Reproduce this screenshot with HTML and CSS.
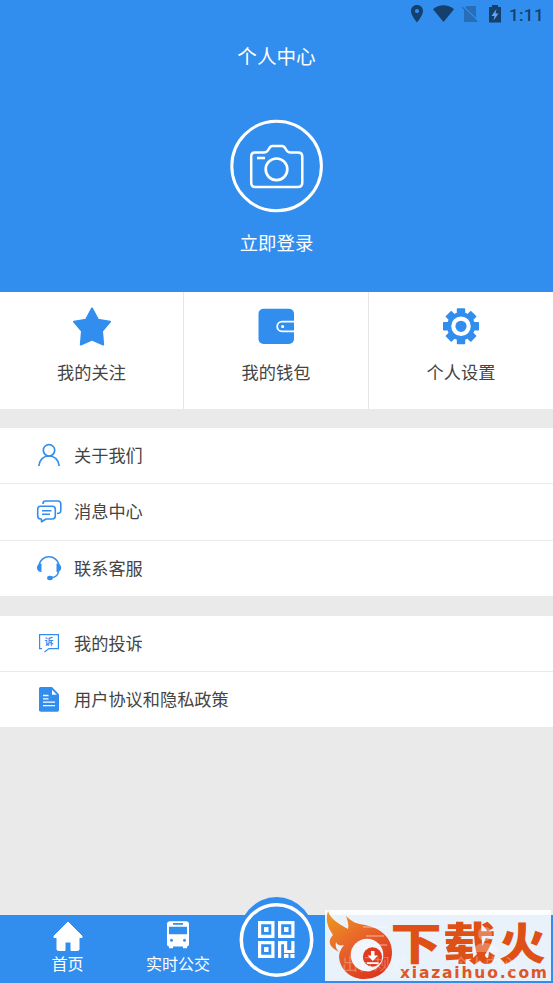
FILE: index.html
```html
<!DOCTYPE html>
<html lang="zh-CN">
<head>
<meta charset="utf-8">
<title>个人中心</title>
<link rel="stylesheet" href="styles.css">
</head>
<body>
<div class="screen">
  <header class="hero">
    <div class="status">
      <svg width="133" height="24" viewBox="0 0 133 24">
        <path fill="#153f6c" fill-rule="evenodd" d="M7 2C3.500 2 1 4.500 1 8c0 4.500 6 11.500 6 11.500S13 12.500 13 8c0-3.500-2.500-6-6-6zm0 4a2.100 2.100 0 1 1 0 4.200A2.100 2.100 0 0 1 7 6z"/>
        <path fill="#153f6c" d="M23 6.200C29 1 38 1 44 6.200L33.500 19z"/>
        <path fill="#276db8" d="M57 3h9v16H54V6z"/>
        <path d="M52.500 3l16 15" stroke="#318eef" stroke-width="1.500"/>
        <path d="M52 4l15.500 15" stroke="#276db8" stroke-width="1.300"/>
        <path fill="#153f6c" d="M79 4h3V2h6v2h3v15.500H79z"/>
        <path fill="#5fa9f5" d="M86.500 6l-5 7h3l-1 4.500 5-7h-3z"/>
      </svg>
      <span class="clock">1:11</span>
    </div>
    <h1 class="title">个人中心</h1>
    <svg class="avatar" width="94" height="94" viewBox="0 0 94 94" fill="none" stroke="#fff">
      <circle cx="46.600" cy="47" r="44.800" stroke-width="3"/>
      <path stroke-width="2.500" stroke-linejoin="round" d="M25 33.500h9c2.500 0 3.500-1 4.500-3 1-2.200 2-3.500 4-3.500h9.500c2 0 3 1.300 4 3.500 1 2 2 3 4.500 3h7.500c3 0 4.300 1.500 4.300 4v26c0 3-1.300 4.500-4.300 4.500H25c-3 0-3.800-1.500-3.800-4.500v-26c0-2.500.8-4 3.800-4z"/>
      <circle cx="46.500" cy="50.300" r="10.800" stroke-width="2.700"/>
      <path d="M27 39h8" stroke-width="2.600"/>
    </svg>
    <div class="login">立即登录</div>
  </header>

  <section class="shortcuts">
    <div class="shortcut">
      <svg width="40" height="40" viewBox="0 0 40 40"><path fill="#318eef" stroke="#318eef" stroke-width="2" stroke-linejoin="round" d="M20 2.500l6 11.200 12 2-8 9.300 1.200 13.500L20 33.500 8.800 38.500 10 25 2 15.700l12-2z"/></svg>
      <span>我的关注</span>
    </div>
    <div class="shortcut">
      <svg width="40" height="40" viewBox="0 0 40 40"><rect x="2.500" y="2.800" width="35.500" height="35.200" rx="5" fill="#318eef"/><path d="M38 15.700H26a4.800 4.800 0 0 0 0 9.600h12" fill="none" stroke="#fff" stroke-width="1.800"/><circle cx="26.600" cy="20.500" r="1.600" fill="#fff"/></svg>
      <span>我的钱包</span>
    </div>
    <div class="shortcut">
      <svg width="40" height="40" viewBox="0 0 40 40" fill="#318eef">
        <g transform="translate(0 .6)">
          <g><rect x="15.800" y="1.700" width="8.400" height="36" rx=".8"/><rect x="2" y="15.500" width="36" height="8.400" rx=".8"/></g>
          <g transform="rotate(45 20 19.700)"><rect x="15.800" y="1.700" width="8.400" height="36" rx=".8"/><rect x="2" y="15.500" width="36" height="8.400" rx=".8"/></g>
          <circle cx="20" cy="19.700" r="14"/><circle cx="20" cy="19.700" r="7.700" fill="none" stroke="#fff" stroke-width="4.200"/>
        </g>
      </svg>
      <span>个人设置</span>
    </div>
  </section>

  <section class="list">
    <div class="row">
      <svg width="26" height="26" viewBox="0 0 26 26" fill="none" stroke="#318eef" stroke-width="1.700"><circle cx="13" cy="8.300" r="5.700"/><path d="M2.800 24C3.300 17.800 7.500 14 13 14s9.700 3.800 10.200 10"/></svg>
      <span>关于我们</span>
    </div>
    <div class="row">
      <svg width="26" height="26" viewBox="0 0 26 26" fill="none" stroke="#318eef" stroke-width="1.600" stroke-linejoin="round"><path d="M7 6V5.500C7 4 8 3 9.500 3h12.300c2 0 3 1 3 3v6.500c0 2-.8 3-3.800 3"/><path d="M4.500 8.300h11.800c2 0 3 1 3 3v6.500c0 2-1 3.200-3 3.200H10l-4.500 2.800V21h-1c-2 0-2.800-1.200-2.800-3.200v-6.500c0-2 .8-3 2.800-3zM6 12.800h9.500M6 16.300h8"/></svg>
      <span>消息中心</span>
    </div>
    <div class="row">
      <svg width="26" height="26" viewBox="0 0 26 26" fill="none" stroke="#318eef" stroke-width="1.600"><path d="M3 9.800C4 5.300 8 1.800 13 1.800S22 5.300 23 9.800M22.500 16c-.5 4.500-3 6.500-7 6.500"/><path fill="#318eef" stroke="none" d="M5.500 8.500v8.500C2.500 17 1 15.500 1 12.800s1.500-4.300 4.500-4.300zM20.500 8.500V17c3 0 4.700-1.500 4.700-4.200s-1.700-4.300-4.700-4.300z"/><ellipse cx="14" cy="23" rx="2.900" ry="2.200" fill="#318eef" stroke="none"/></svg>
      <span>联系客服</span>
    </div>
  </section>

  <section class="list">
    <div class="row">
      <svg width="26" height="26" viewBox="0 0 26 26"><path fill="none" stroke="#318eef" stroke-width="1.200" d="M6 18.600H3.600V4.600h18.800v14H13L8.500 22"/><text class="mini" x="13" y="15.200" text-anchor="middle">诉</text></svg>
      <span>我的投诉</span>
    </div>
    <div class="row">
      <svg width="26" height="26" viewBox="0 0 26 26"><path fill="#318eef" d="M5 1h11L23 8.300V24c0 1-.7 1.700-1.700 1.700H5c-1.200 0-2-.7-2-1.700V2.700C3 1.700 3.800 1 5 1z"/><path fill="#fff" d="M16 3.800v5h4.800z"/><path stroke="#fff" stroke-width="1.300" d="M7 9.500h5.500M7 12.800h5.500M7 16.100h12M7 19.700h12"/></svg>
      <span>用户协议和隐私政策</span>
    </div>
  </section>

  <nav class="tabs">
    <div class="tab">
      <svg width="32" height="32" viewBox="0 0 32 32"><path fill="#fff" stroke="#fff" stroke-width="1" stroke-linejoin="round" d="M16 2l14 14v1.500h-3V29c0 1-.5 1.500-1.500 1.500H19V22h-6v8.500H6.500C5.500 30.500 5 30 5 29V17.500H2V16z"/></svg>
      <span>首页</span>
    </div>
    <div class="tab">
      <svg width="32" height="32" viewBox="0 0 32 32"><path fill="#fff" fill-rule="evenodd" d="M8 1.300h16c2 0 3 1.200 3 3V24c0 1.500-.6 2.300-2 2.500v1.700h-4v-1.700H11v1.700H7v-1.700c-1.400-.2-2-1-2-2.500V4.300c0-1.800 1-3 3-3zm3 1.800v1.700h10V3.100zM7 6.800v7.500h18V6.800zm2.500 12a1.500 1.500 0 1 0 0 3 1.500 1.500 0 0 0 0-3zm13 0a1.500 1.500 0 1 0 0 3 1.500 1.500 0 0 0 0-3z"/></svg>
      <span>实时公交</span>
    </div>
    <div class="scan">
      <svg width="86" height="86" viewBox="0 0 86 86">
        <ellipse cx="43.500" cy="43" rx="39" ry="43" fill="#318eef"/><circle cx="43.500" cy="43" r="35.200" fill="none" stroke="#fff" stroke-width="3.500"/>
        <g fill="none" stroke="#fff" stroke-width="3.200"><path d="M26.600 25.600h13.300v13.800H26.600zM46.600 25.600h13.300v13.800H46.600zM26.600 45.600h13.300v13.800H26.600zM46.600 61V45.600h6v9.500M59.900 44v10.500H51"/></g>
        <path fill="#fff" d="M31 30h4.500v5H31zM51 30h4.500v5H51zM31 50h4.500v5H31zM51 57h4.500v4H51zM57.500 57h4v4h-4z"/>
      </svg>
    </div>
  </nav>

  <div class="watermark">
    <svg width="226" height="71" viewBox="0 0 226 71">
      <defs><linearGradient id="fire" x1="0" y1="0" x2=".7" y2="1"><stop offset="0" stop-color="#ee9a20"/><stop offset=".5" stop-color="#e8642a"/><stop offset="1" stop-color="#dc371c"/></linearGradient></defs>
      <path fill="#fff" fill-opacity=".8" d="M0 0h226v5H0z"/>
      <path fill="url(#fire)" d="M3 1C5 8 12 13 23 19c1-4 0-7-2-13 6 6 11 8 19 9 16 3 27 13 27 27 0 16-12 27-28 27-14 0-24-10-25-22 0-5 2-8 5-12-4 1-7 0-8-3-1 4 0 7 3 10C4 37 2 31 8 25 3 18 0 10 3 1z"/>
      <circle cx="42" cy="45" r="16.300" fill="#f1f6fc"/><circle cx="47.500" cy="47" r="9.700" fill="#df3b20"/>
      <path fill="#fff" d="M46 41h3.500v4.500h3.500l-5.200 5.500-5.200-5.500H46zM42 52.300h11.500v1.700H42z"/>
      <g class="brand"><text transform="translate(65.500 49.700) scale(1.160 1)">下</text><text transform="translate(118 49.700) scale(1.200 1)">载</text><text transform="translate(174 49.700) scale(1.060 1)">火</text></g>
      <text class="site" x="75" y="68.300" textLength="147" lengthAdjust="spacing">xiazaihuo.com</text>
      <g class="faded"><path stroke="#fff" stroke-width="2" d="M38 17h24M41 26h18M38 35h24"/><text x="49" y="60" text-anchor="middle">出行规划</text></g>
      <g class="faded"><circle cx="160" cy="24" r="7" fill="#fff"/><path fill="#fff" d="M147 42c2-12 24-12 26 0z"/><text x="160" y="60" text-anchor="middle">个人中心</text></g>
    </svg>
  </div>
</div>
</body>
</html>
```
FILE: styles.css
```css
* { box-sizing: border-box; }
body {
  margin: 0;
  font-family: "Noto Sans CJK SC", sans-serif;
  color: #444;
}
svg { display: block; flex: none; }
.screen {
  position: relative;
  display: flex;
  flex-direction: column;
  width: 553px;
  height: 983px;
  overflow: hidden;
  background: #eaeaea;
}
.hero {
  display: flex;
  flex-direction: column;
  align-items: center;
  height: 292px;
  flex: none;
  background: #318eef;
  color: #fff;
}
.status {
  display: flex;
  align-self: flex-end;
  align-items: center;
  height: 30px;
  padding: 0 9px 0 0;
}
.status svg { margin-right: -34px; }
.clock {
  font: 500 17px/30px Roboto, sans-serif;
  letter-spacing: .4px;
  color: #153f6c;
}
.title {
  margin: 11px 0 0;
  font-size: 19.600px;
  font-weight: 400;
  line-height: 30px;
}
.avatar { margin-top: 48px; }
.login {
  margin-top: 15px;
  font-size: 18.400px;
  line-height: 28px;
}
.shortcuts {
  display: grid;
  grid-template-columns: 184px 185px 184px;
  height: 117px;
  flex: none;
  background: #fff;
}
.shortcut {
  display: flex;
  flex-direction: column;
  align-items: center;
  padding-top: 14px;
  font-size: 17.200px;
  line-height: 26px;
  border-right: 1px solid #e6e6e6;
}
.shortcut:last-child { border-right: 0; }
.shortcut span { margin-top: 13px; }
.list {
  flex: none;
  margin-top: 19px;
  background: #fff;
}
.row {
  display: flex;
  align-items: center;
  gap: 12px;
  height: 56.300px;
  padding: 0 36px 1px;
  font-size: 17.200px;
  line-height: 26px;
  border-bottom: 1px solid #eaeaea;
}
.row span { padding-bottom: .3px; }
.mini { font-size: 9px; font-weight: 700; fill: #318eef; }
.tabs {
  display: grid;
  grid-template-columns: 111px 110px 87px 110px 111px;
  justify-content: center;
  height: 68px;
  flex: none;
  margin-top: auto;
  background: #318eef;
  color: #fff;
}
.tab {
  display: flex;
  flex-direction: column;
  align-items: center;
  justify-content: flex-end;
  padding-bottom: 8px;
  font-size: 16px;
  line-height: 24px;
}
.tab svg { margin-bottom: -1px; }
.scan { margin-top: -18px; }
.watermark {
  position: absolute;
  left: 325px;
  top: 910px;
  width: 226px;
  height: 71px;
  background: #e9f2fb;
}
.brand { font-size: 44px; font-weight: 900; fill: #df5017; }
.site { font: 700 15.500px "DejaVu Sans", sans-serif; fill: #df5525; }
.faded { font-size: 16px; fill: #fff; opacity: .28; }
```
